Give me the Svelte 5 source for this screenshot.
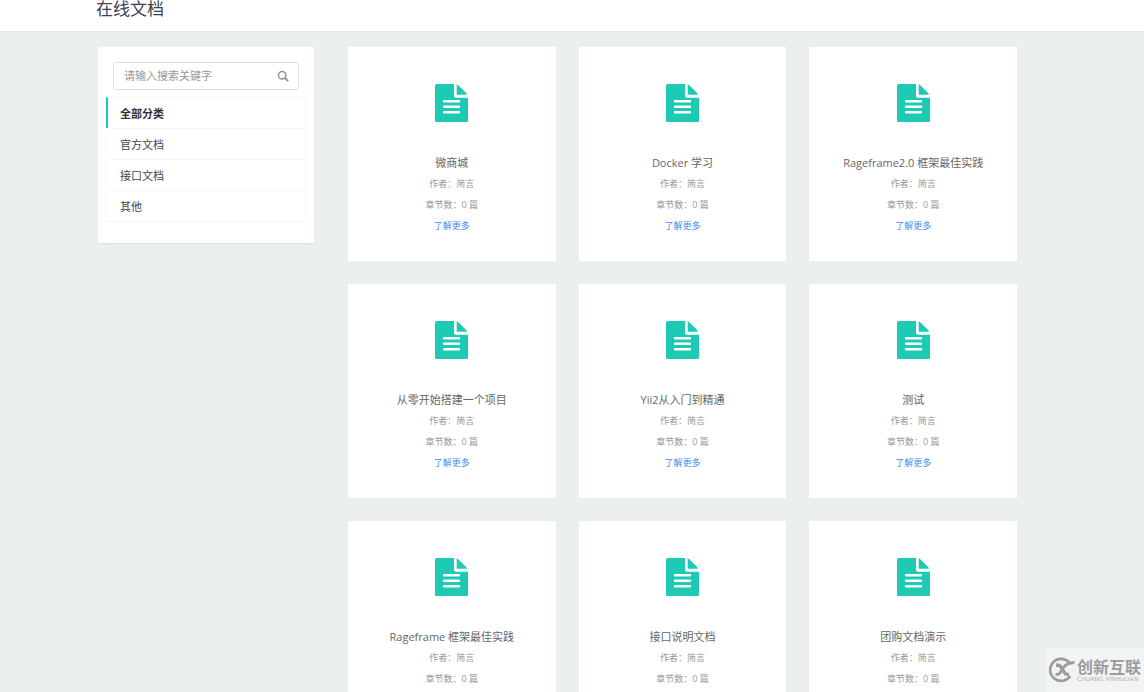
<script>
  const categories = ['全部分类', '官方文档', '接口文档', '其他'];
  let active = $state(0);
  let keyword = $state('');

  const docs = [
    '微商城',
    'Docker 学习',
    'Rageframe2.0 框架最佳实践',
    '从零开始搭建一个项目',
    'Yii2从入门到精通',
    '测试',
    'Rageframe 框架最佳实践',
    '接口说明文档',
    '团购文档演示'
  ].map((title) => ({ title, author: '简言', chapters: 0 }));
</script>

<header class="top">
  <h1>在线文档</h1>
</header>

<div class="layout">
  <aside class="side">
    <form class="search" onsubmit={(e) => e.preventDefault()}>
      <input type="text" placeholder="请输入搜索关键字" aria-label="请输入搜索关键字" bind:value={keyword} />
      <button type="submit" aria-label="搜索">
        <svg viewBox="0 0 12 12" width="12" height="12" fill="none" stroke="#979797">
          <circle cx="5.2" cy="5.2" r="3.700" stroke-width="1.600" />
          <path d="M8 8 10.600 10.600" stroke-width="2" stroke-linecap="round" />
        </svg>
      </button>
    </form>
    <nav class="menu">
      {#each categories as name, i}
        <a href="#list" class:active={active === i} onclick={() => (active = i)}>{name}</a>
      {/each}
    </nav>
  </aside>

  <main class="grid" id="list">
    {#each docs as doc}
      <article class="card">
        <svg class="icon" viewBox="0 0 33 38" width="33" height="38" aria-hidden="true">
          <path
            fill="#1fcab5"
            d="M1.8 0H19v11.800a2 2 0 0 0 2 2h12v22.600a1.800 1.800 0 0 1-1.800 1.800H1.800A1.800 1.800 0 0 1 0 36.400V1.800A1.800 1.800 0 0 1 1.800 0Z"
          />
          <path fill="#1fcab5" d="M21.700 0.300c.7.200 1.300.6 1.800 1.100l7.400 7.400c.5.500.9 1.300 1.100 2H21.700Z" />
          <path stroke="#fff" stroke-width="2.400" stroke-linecap="round" d="M9 17.300H24M9 22.800H24M9 28.300H24" />
        </svg>
        <h2>{doc.title}</h2>
        <p>作者：{doc.author}</p>
        <p>章节数：{doc.chapters} 篇</p>
        <a href="#doc">了解更多</a>
      </article>
    {/each}
  </main>
</div>

<div class="brand">
  <svg viewBox="0 0 27 26" width="27" height="26" fill="none" stroke="#9c9c9c" aria-hidden="true">
    <path d="M21 5.200A11 11 0 1 0 22.300 19" stroke-width="2.600" />
    <path d="M8 8.200h2.200c1.300 0 2 .6 2.700 1.700l3.600 5.800c.7 1.100 1.400 1.700 2.700 1.700H21" stroke-width="3.400" />
    <path d="M26.500 5.500c-6 .3-9 1.800-11.200 5.200L12.200 15.600c-.8 1.200-1.500 1.800-2.800 1.800H7.500" stroke-width="2.800" />
  </svg>
  <div class="words">
    <strong>创新互联</strong>
    <small>CHUANG XINHULIAN</small>
  </div>
</div>

<style>
  :global(body) {
    margin: 0;
    background: #ebeff0;
    font-family: 'Open Sans', 'Noto Sans CJK SC', sans-serif;
    color: #333;
  }

  .top {
    box-sizing: border-box;
    height: 32px;
    padding: 0 127px 0 96px;
    background: #fff;
    border-bottom: 1px solid #e6eaeb;
  }

  h1 {
    margin: 0;
    font-size: 17px;
    line-height: 18px;
    font-weight: 400;
    color: #3c4353;
  }

  .layout {
    display: grid;
    grid-template-columns: 216px minmax(0, 1fr);
    gap: 34px;
    align-items: start;
    padding: 15px 127px 23px 98px;
  }

  .side {
    padding: 15px 7px 21px;
    background: #fff;
    border-radius: 2px;
    box-shadow: 0 1px 2px rgba(0, 0, 0, 0.06);
  }

  .search {
    display: flex;
    align-items: center;
    margin: 0 8px 7px;
    box-sizing: border-box;
    height: 28px;
    border: 1px solid #dfe2e4;
    border-radius: 3px;
  }

  .search input {
    flex: 1;
    min-width: 0;
    padding: 0 0 0 10px;
    border: 0;
    outline: 0;
    background: none;
    font: inherit;
    font-size: 11px;
    line-height: 20px;
    color: #333;
  }

  .search input::placeholder {
    color: #999;
    opacity: 1;
  }

  .search button {
    display: flex;
    padding: 0 9px;
    border: 0;
    background: none;
    cursor: pointer;
  }

  .menu {
    display: flex;
    flex-direction: column;
    border: 1px solid #f6f7f7;
    border-top: 0;
  }

  .menu a {
    box-sizing: border-box;
    height: 31px;
    padding-left: 12px;
    border-top: 1px solid #f6f7f7;
    border-left: 2px solid transparent;
    font-size: 11px;
    line-height: 31px;
    color: #444;
    text-decoration: none;
  }

  .menu a.active {
    border-left-color: #1fcab5;
    font-weight: 700;
    color: #333;
  }

  .grid {
    display: grid;
    grid-template-columns: repeat(3, minmax(0, 1fr));
    gap: 23px;
  }

  .card {
    display: flex;
    flex-direction: column;
    align-items: center;
    padding: 37px 10px 25px;
    background: #fff;
    text-align: center;
  }

  .icon {
    margin-bottom: 30px;
  }

  .card h2 {
    margin: 0;
    font-size: 11px;
    line-height: 21px;
    font-weight: 400;
    color: #666;
  }

  .card p,
  .card a {
    margin: 0;
    font-size: 9px;
    line-height: 21px;
    color: #999;
  }

  .card a {
    color: #3d8df5;
    text-decoration: none;
  }

  .brand {
    position: fixed;
    right: 0;
    bottom: 0;
    display: flex;
    align-items: center;
    gap: 2px;
    box-sizing: border-box;
    height: 44px;
    padding: 0 3px;
    background: #f2f3f3;
    color: #9c9c9c;
  }

  .words {
    display: flex;
    flex-direction: column;
  }

  .words strong {
    font-size: 16px;
    line-height: 18px;
    font-weight: 700;
  }

  .words small {
    font-family: 'DejaVu Sans', sans-serif;
    font-size: 6px;
    line-height: 6px;
    color: #b4b4b4;
  }
</style>
